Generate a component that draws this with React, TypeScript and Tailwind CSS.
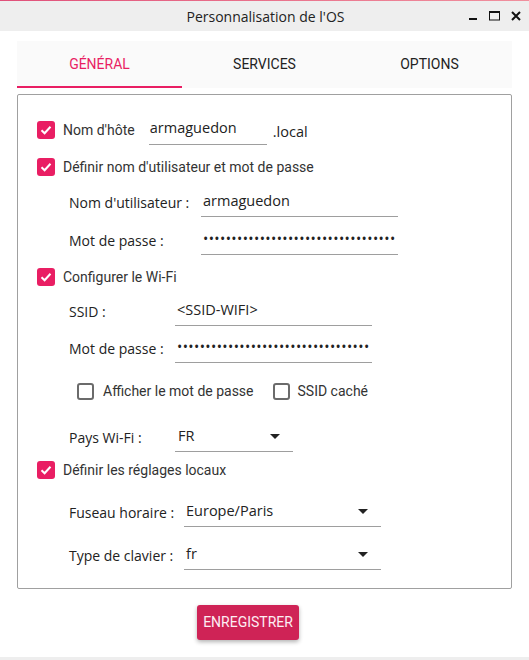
import React from 'react';

function CheckBox({ checked }: { checked: boolean }) {
    if (checked) {
        return (
            <div className="w-[18px] h-[18px] shrink-0 rounded-[3px] bg-[#e91e63] flex items-center justify-center">
                <svg width="12" height="10" viewBox="0 0 12 10">
                    <path d="M1.5 5.2 L4.6 8.2 L10.5 1.8" fill="none" stroke="white" strokeWidth="2" />
                </svg>
            </div>
        );
    }
    return <div className="w-[17px] h-[17px] shrink-0 rounded-[3px] border-2 border-[#6b6b6b]" />;
}

function CheckRow({ label, className = '' }: { label: string; className?: string }) {
    return (
        <div className={`flex items-center h-[30px] ${className}`}>
            <CheckBox checked />
            <span className="ml-[8px] font-['Roboto'] text-[14px] text-[#333]">{label}</span>
        </div>
    );
}

function Dots({ n }: { n: number }) {
    return <span className="text-[14px] tracking-[0.4px] leading-none">{'•'.repeat(n)}</span>;
}

function Arrow() {
    return (
        <svg width="10" height="5" viewBox="0 0 10 5" className="shrink-0">
            <path d="M0 0 L10 0 L5 5 Z" fill="#222" />
        </svg>
    );
}

function Field({
    label,
    labelW,
    inputW,
    className = '',
    children,
}: {
    label: string;
    labelW: string;
    inputW: string;
    className?: string;
    children: React.ReactNode;
}) {
    return (
        <div className={`flex h-[32px] pl-[50px] ${className}`}>
            <div className={`${labelW} shrink-0 flex items-center pt-[3px] text-[14px] text-[#222]`}>{label}</div>
            <div className={`${inputW} h-full border-b border-[#9e9e9e] flex items-center pt-[1px] pl-[2px] pr-[13px] text-[14.5px] text-[#222] overflow-hidden whitespace-nowrap`}>
                {children}
            </div>
        </div>
    );
}

export default function App() {
    return (
        <div className="w-[529px] h-[660px] bg-white flex flex-col font-['Open_Sans',sans-serif] overflow-hidden">
            {/* title bar */}
            <div className="h-[1px] bg-gradient-to-r from-[#e0507a] to-[#f0909e]" />
            <div className="h-[30px] bg-[#eeeeee] flex items-center relative">
                <div className="flex-1 text-center text-[14px] text-[#222] pl-[2px]">Personnalisation de l'OS</div>
                <div className="absolute right-[8px] top-0 h-full flex items-center gap-[11px]">
                    <svg width="9" height="10" viewBox="0 0 9 10">
                        <rect x="0" y="7" width="8" height="2" fill="#111" />
                    </svg>
                    <svg width="11" height="10" viewBox="0 0 11 10">
                        <rect x="0.5" y="0.5" width="10" height="8.5" fill="none" stroke="#111" />
                        <rect x="0" y="0" width="11" height="2" fill="#111" />
                    </svg>
                    <svg width="10" height="10" viewBox="0 0 10 10">
                        <path d="M1 1 L9 9 M9 1 L1 9" stroke="#111" strokeWidth="2" />
                    </svg>
                </div>
            </div>

            <div className="px-[17px] pt-[10px] flex flex-col">
                {/* tabs */}
                <div className="h-[47px] bg-[#fafafa] grid grid-cols-3 font-['Roboto'] text-[14px]">
                    <div className="flex items-center justify-center border-b-2 border-[#e91e63] text-[#e91e63] pt-[2px]">GÉNÉRAL</div>
                    <div className="flex items-center justify-center text-[#222]">SERVICES</div>
                    <div className="flex items-center justify-center text-[#222]">OPTIONS</div>
                </div>

                {/* panel */}
                <div className="mt-[6px] h-[495px] border border-[#a0a0a0] rounded-[2px] pl-[19px] flex flex-col">
                    <div className="flex items-center h-[30px] mt-[20px]">
                        <CheckBox checked />
                        <span className="ml-[8px] font-['Roboto'] text-[14px] text-[#333]">Nom d'hôte</span>
                        <div className="ml-[14px] w-[118px] h-[30px] border-b border-[#9e9e9e] flex items-center pl-[1px] pb-[4px] text-[14.5px] text-[#222]">
                            armaguedon
                        </div>
                        <span className="ml-[6px] text-[14.5px] text-[#222] pt-[3px]">.local</span>
                    </div>

                    <CheckRow label="Définir nom d'utilisateur et mot de passe" className="mt-[7px]" />

                    <Field label="Nom d'utilisateur :" labelW="w-[132px]" inputW="w-[197px]" className="-ml-[18px] mt-[3px]">
                        armaguedon
                    </Field>
                    <Field label="Mot de passe :" labelW="w-[132px]" inputW="w-[197px]" className="-ml-[18px] mt-[6px]">
                        <Dots n={34} />
                    </Field>

                    <CheckRow label="Configurer le Wi-Fi" className="mt-[7px]" />

                    <Field label="SSID :" labelW="w-[106px]" inputW="w-[197px]" className="-ml-[18px] mt-[2px]">
                        &lt;SSID-WIFI&gt;
                    </Field>
                    <Field label="Mot de passe :" labelW="w-[106px]" inputW="w-[197px]" className="-ml-[18px] mt-[5px]">
                        <Dots n={34} />
                    </Field>

                    <div className="flex items-center h-[30px] mt-[13px] pl-[40px] font-['Roboto'] text-[14px] text-[#333]">
                        <CheckBox checked={false} />
                        <span className="ml-[9px]">Afficher le mot de passe</span>
                        <div className="ml-[19px]">
                            <CheckBox checked={false} />
                        </div>
                        <span className="ml-[8px]">SSID caché</span>
                    </div>

                    <Field label="Pays Wi-Fi :" labelW="w-[106px]" inputW="w-[118px]" className="-ml-[18px] mt-[14px]">
                        <span className="flex-1 pl-[1px]">FR</span>
                        <Arrow />
                    </Field>

                    <CheckRow label="Définir les réglages locaux" className="mt-[3px]" />

                    <Field label="Fuseau horaire :" labelW="w-[115px]" inputW="w-[197px]" className="-ml-[18px] mt-[10px]">
                        <span className="flex-1">Europe/Paris</span>
                        <Arrow />
                    </Field>
                    <Field label="Type de clavier :" labelW="w-[115px]" inputW="w-[197px]" className="-ml-[18px] mt-[11px]">
                        <span className="flex-1">fr</span>
                        <Arrow />
                    </Field>
                </div>

                <div className="flex mt-[16px] pl-[180px]">
                    <button className="w-[102px] h-[35px] rounded-[3px] bg-[#cf2356] text-[#fdeef3] font-['Roboto'] text-[14px] shadow-[0_2px_4px_rgba(0,0,0,0.3)]">
                        ENREGISTRER
                    </button>
                </div>
            </div>

            <div className="flex-1" />
            <div className="h-[3px] bg-[#eeeeee]" />
        </div>
    );
}
